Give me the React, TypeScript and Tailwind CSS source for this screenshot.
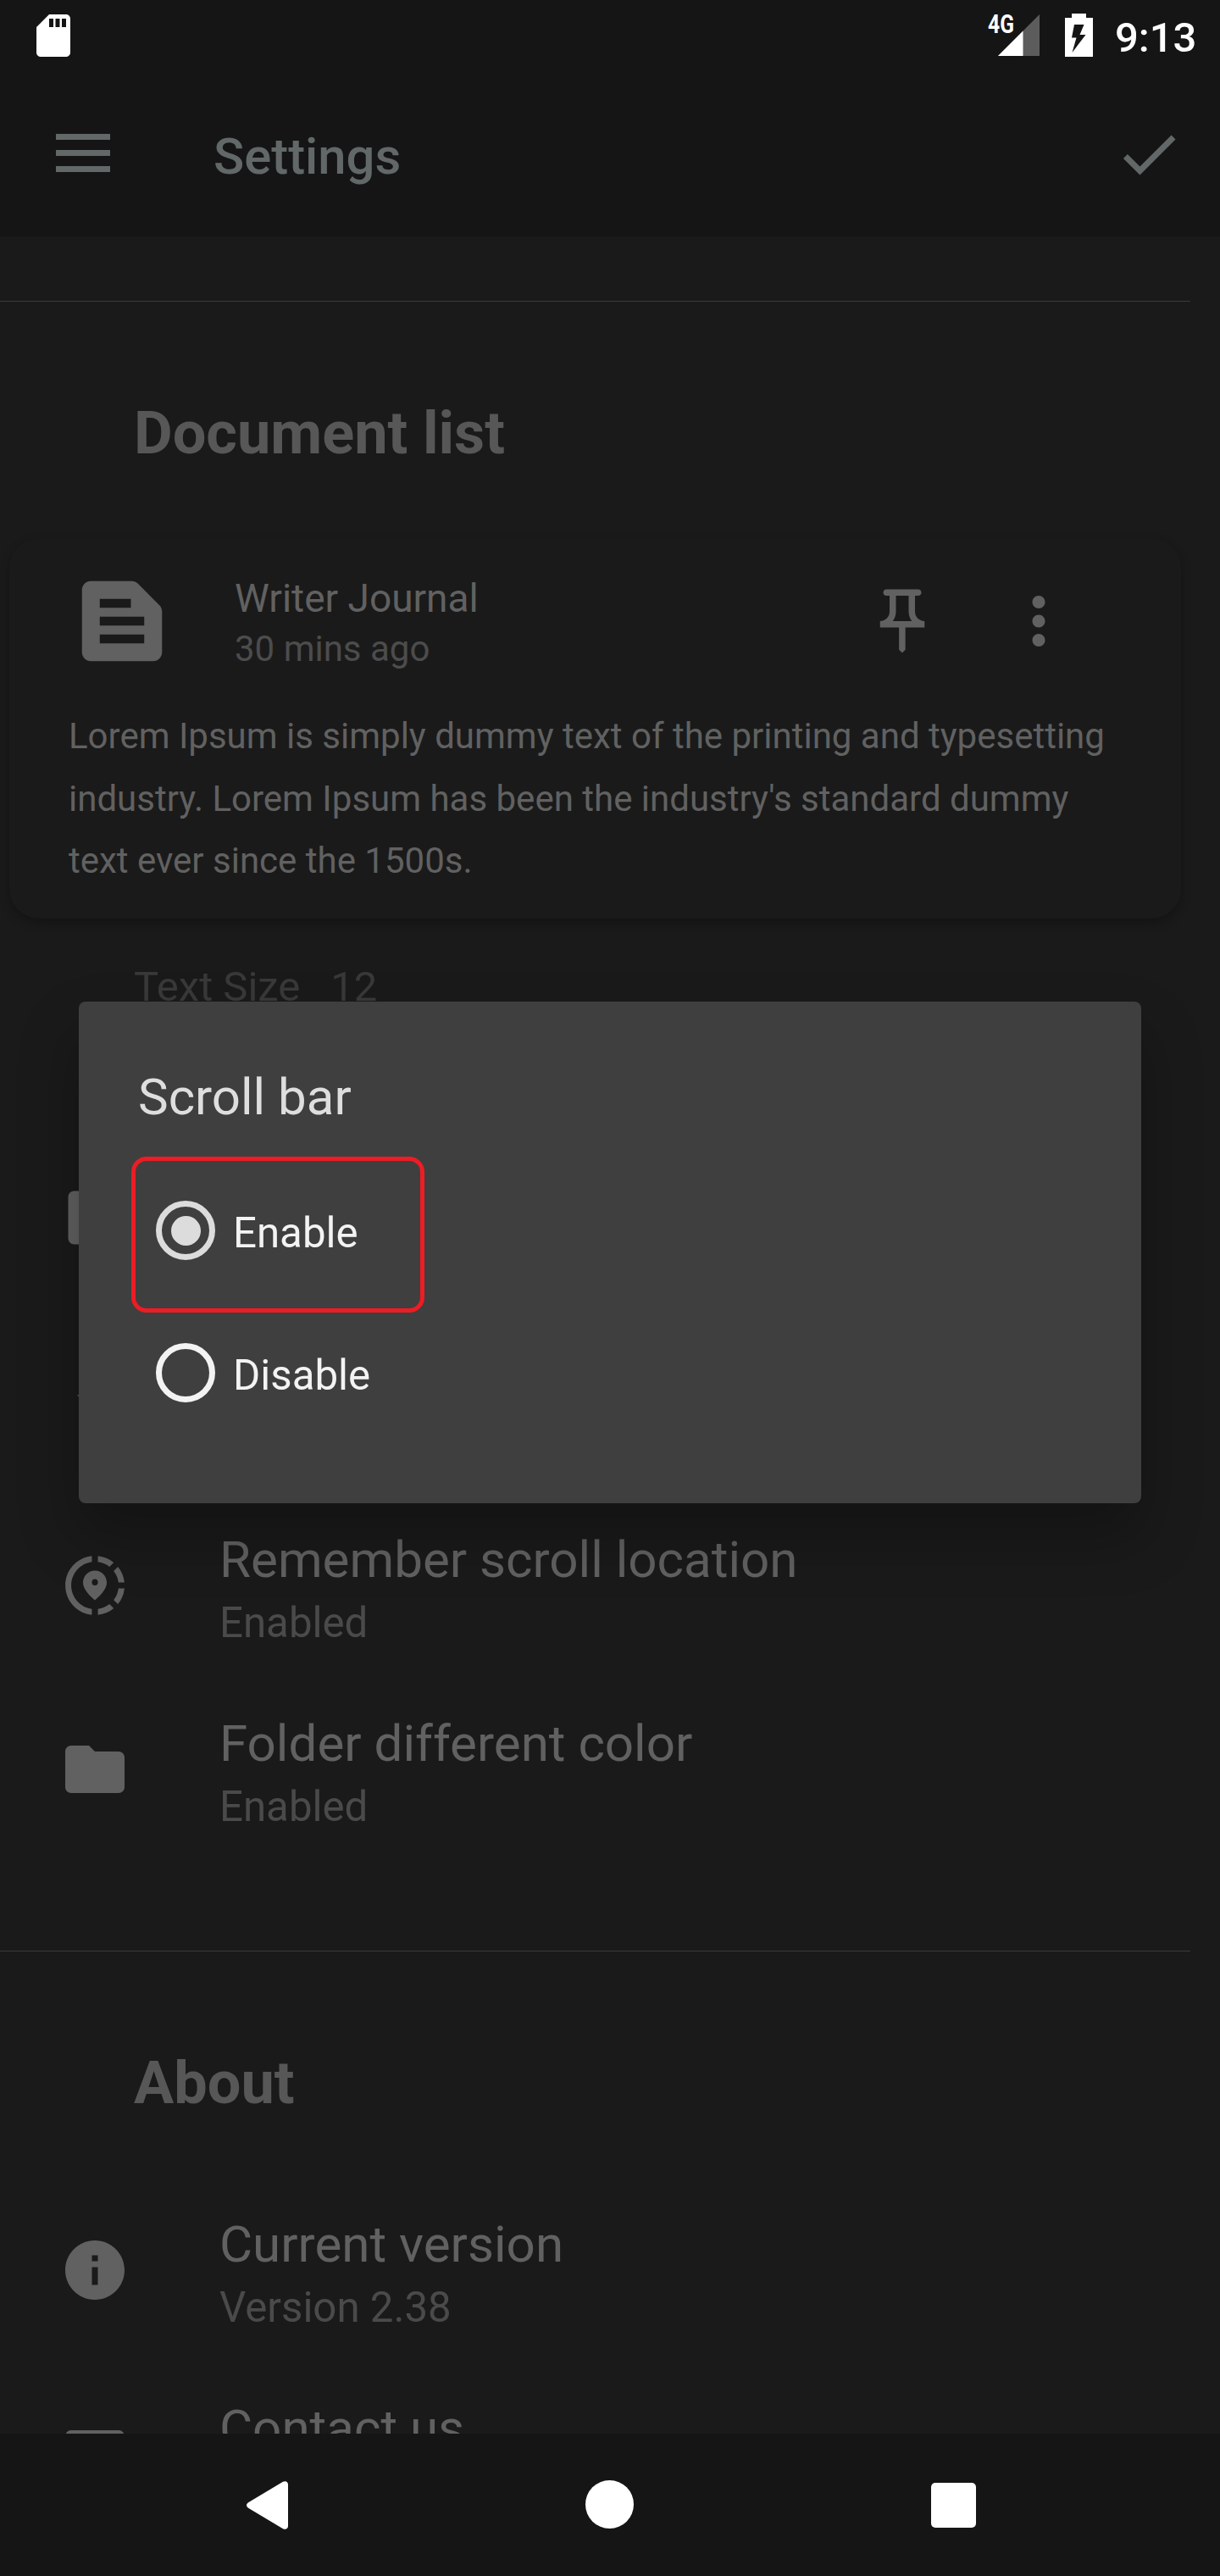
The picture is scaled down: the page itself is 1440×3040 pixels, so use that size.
import type { ReactNode } from "react";
import {
  MdCheck,
  MdEmail,
  MdFolder,
  MdInfo,
  MdMoreVert,
  MdOutlinePushPin,
  MdSdCard,
  MdShareLocation,
  MdTextSnippet,
} from "react-icons/md";

function StatusBar() {
  return (
    <header className="flex h-[84px] shrink-0 items-start bg-[#151515] pl-[33px] pr-[27px] text-white">
      <MdSdCard className="mt-3 size-[60px]" />
      <div className="relative ml-auto mt-[16px] h-[51px] w-[61px]">
        <svg viewBox="0 0 49 49" className="absolute left-[12px] top-px size-[49px]">
          <path d="M49 0V49H0Z" fill="#5c5c5c" />
          <path d="M29.5 19.5V49H0Z" fill="#fff" />
        </svg>
        <span className="absolute -top-[3px] left-0 origin-left scale-x-[0.77] text-[32px] font-bold leading-[30px]">4G</span>
      </div>
      <svg viewBox="0 0 33 51" className="ml-[30px] mt-[16px] h-[51px] w-[33px]">
        <path
          fillRule="evenodd"
          fill="#fff"
          d="M8 0H25V5H33V51H0V5H8ZM11 13 8 28.500H13.500L8.500 46 24.500 25H17.500L22.500 13Z"
        />
      </svg>
      <span className="ml-[26px] mt-[16px] w-[97px] whitespace-nowrap text-[49px] font-medium leading-[57px]">9:13</span>
    </header>
  );
}

function Toolbar() {
  return (
    <div className="flex h-[195px] shrink-0 items-start bg-[#151515] pl-[66px] pr-[42px] text-[#616867]">
      <div className="mt-[74px] flex w-[64px] flex-col gap-[12px]">
        <div className="h-[7px] bg-current" />
        <div className="h-[7px] bg-current" />
        <div className="h-[7px] bg-current" />
      </div>
      <h1 className="ml-[122px] mt-[65px] text-[59.8px] font-medium leading-[72px]">Settings</h1>
      <MdCheck className="ml-auto mt-[56px] size-[84px]" />
    </div>
  );
}

function SectionTitle({ children }: { children: ReactNode }) {
  return <h2 className="ml-[158px] mt-[114px] text-[70.3px] font-bold leading-[82px] text-[#575757]">{children}</h2>;
}

function DocumentCard() {
  return (
    <article className="ml-[10.5px] mt-[83px] h-[449px] w-[1383px] rounded-[35px] bg-[#1a1a1a] pl-[70.5px] pt-[35px] text-[#616161] shadow-[0_5px_12px_rgba(0,0,0,0.26)]">
      <div className="flex h-[126px] items-start">
        <MdTextSnippet className="size-[126px]" />
        <div className="ml-[70px] mt-[6px] leading-[60px]">
          <div className="text-[46px]">Writer Journal</div>
          <div className="text-[42px] text-[#4c4c4c]">30 mins ago</div>
        </div>
        <div className="ml-auto mr-[122.5px] mt-[18px] flex gap-[71px]">
          <MdOutlinePushPin className="size-[90px]" />
          <MdMoreVert className="size-[90px]" />
        </div>
      </div>
      <p className="mt-[36px] whitespace-nowrap text-[42px] leading-[73.5px]">
        Lorem Ipsum is simply dummy text of the printing and typesetting
        <br />
        industry. Lorem Ipsum has been the industry's standard dummy
        <br />
        text ever since the 1500s.
      </p>
    </article>
  );
}

function Row({ icon, title, detail }: { icon: ReactNode; title?: string; detail?: string }) {
  return (
    <div className="flex h-[217px] items-start pl-[70px] text-[#616161]">
      <div className="mt-[26px] size-[84px]">{icon}</div>
      <div className="ml-[105px] whitespace-nowrap">
        <div className="text-[60.1px] leading-[76px]">{title}</div>
        <div className="text-[49.2px] leading-[72px] text-[#4a4a4a]">{detail}</div>
      </div>
    </div>
  );
}

function Content() {
  return (
    <main className="min-h-0 flex-1 overflow-hidden">
      <div className="mt-[76px] h-px w-[1405px] bg-[#3a3a3a]" />
      <SectionTitle>Document list</SectionTitle>
      <DocumentCard />
      <div className="ml-[158px] mt-[52px] flex gap-[36px] text-[49px] leading-[58px] text-[#393939]">
        <span>Text Size</span>
        <span>12</span>
      </div>
      <div className="mt-[175px]">
        <Row
          icon={
            <svg viewBox="0 0 24 24" fill="currentColor" className="size-[84px]">
              <rect x="3" y="3" width="18" height="18" rx="2" />
            </svg>
          }
        />
        <Row
          icon={
            <svg viewBox="0 0 24 24" fill="currentColor" className="size-[84px]">
              <path d="M6 10 7 9.500H17L18 10 17 10.500H7Z" />
            </svg>
          }
        />
        <Row icon={<MdShareLocation className="size-[84px]" />} title="Remember scroll location" detail="Enabled" />
        <Row icon={<MdFolder className="size-[84px]" />} title="Folder different color" detail="Enabled" />
      </div>
      <div className="mt-[65px] h-px w-[1405px] bg-[#3a3a3a]" />
      <SectionTitle>About</SectionTitle>
      <div className="mt-[112px]">
        <Row icon={<MdInfo className="size-[84px]" />} title="Current version" detail="Version 2.38" />
        <Row icon={<MdEmail className="size-[84px]" />} title="Contact us" />
      </div>
    </main>
  );
}

function ScrollBarDialog() {
  return (
    <div
      role="dialog"
      className="absolute left-[93px] top-[1182px] h-[592px] w-[1254px] rounded-[8px] bg-[#3f3f3f] pl-[62px] pt-[77px] text-[#f3f3f3] shadow-[0_38px_70px_rgba(0,0,0,0.27)]"
    >
      <h3 className="ml-[8px] text-[60px] leading-[72px] text-[#dedede]">Scroll bar</h3>
      <div className="mt-[34px] flex h-[184px] w-[346px] rounded-[18px] border-[5px] border-[#ee1c24] pl-[24px] pt-[47px]">
        <span className="flex size-[70px] items-center justify-center rounded-full border-[7px] border-[#dcdcdc]">
          <span className="size-[35px] rounded-full bg-[#dcdcdc]" />
        </span>
        <span className="ml-[21px] mt-[9px] text-[49.2px] leading-[58px]">Enable</span>
      </div>
      <div className="ml-[29px] mt-[36px] flex">
        <span className="size-[70px] rounded-full border-[7px] border-[#f3f3f3]" />
        <span className="ml-[21px] mt-[9px] text-[49.2px] leading-[58px]">Disable</span>
      </div>
    </div>
  );
}

function NavigationBar() {
  return (
    <nav className="flex h-[168px] shrink-0 items-start bg-[#151515] pl-[291px]">
      <svg viewBox="0 0 49 57" className="mt-[56px] h-[57px] w-[49px]">
        <path d="M43 .8C46-.8 49 .8 49 4V53C49 56.200 46 57.800 43 56.200L2.500 32C-.8 30-.8 27 2.500 25Z" fill="#fff" />
      </svg>
      <div className="ml-[351px] mt-[55px] size-[57px] rounded-full bg-white" />
      <div className="ml-[351px] mt-[58px] size-[53px] rounded-[5px] bg-white" />
    </nav>
  );
}

export default function App() {
  return (
    <div className="relative flex h-[3040px] w-[1440px] flex-col overflow-hidden bg-[#1a1a1a] font-['Roboto',sans-serif]">
      <StatusBar />
      <Toolbar />
      <Content />
      <NavigationBar />
      <ScrollBarDialog />
    </div>
  );
}
